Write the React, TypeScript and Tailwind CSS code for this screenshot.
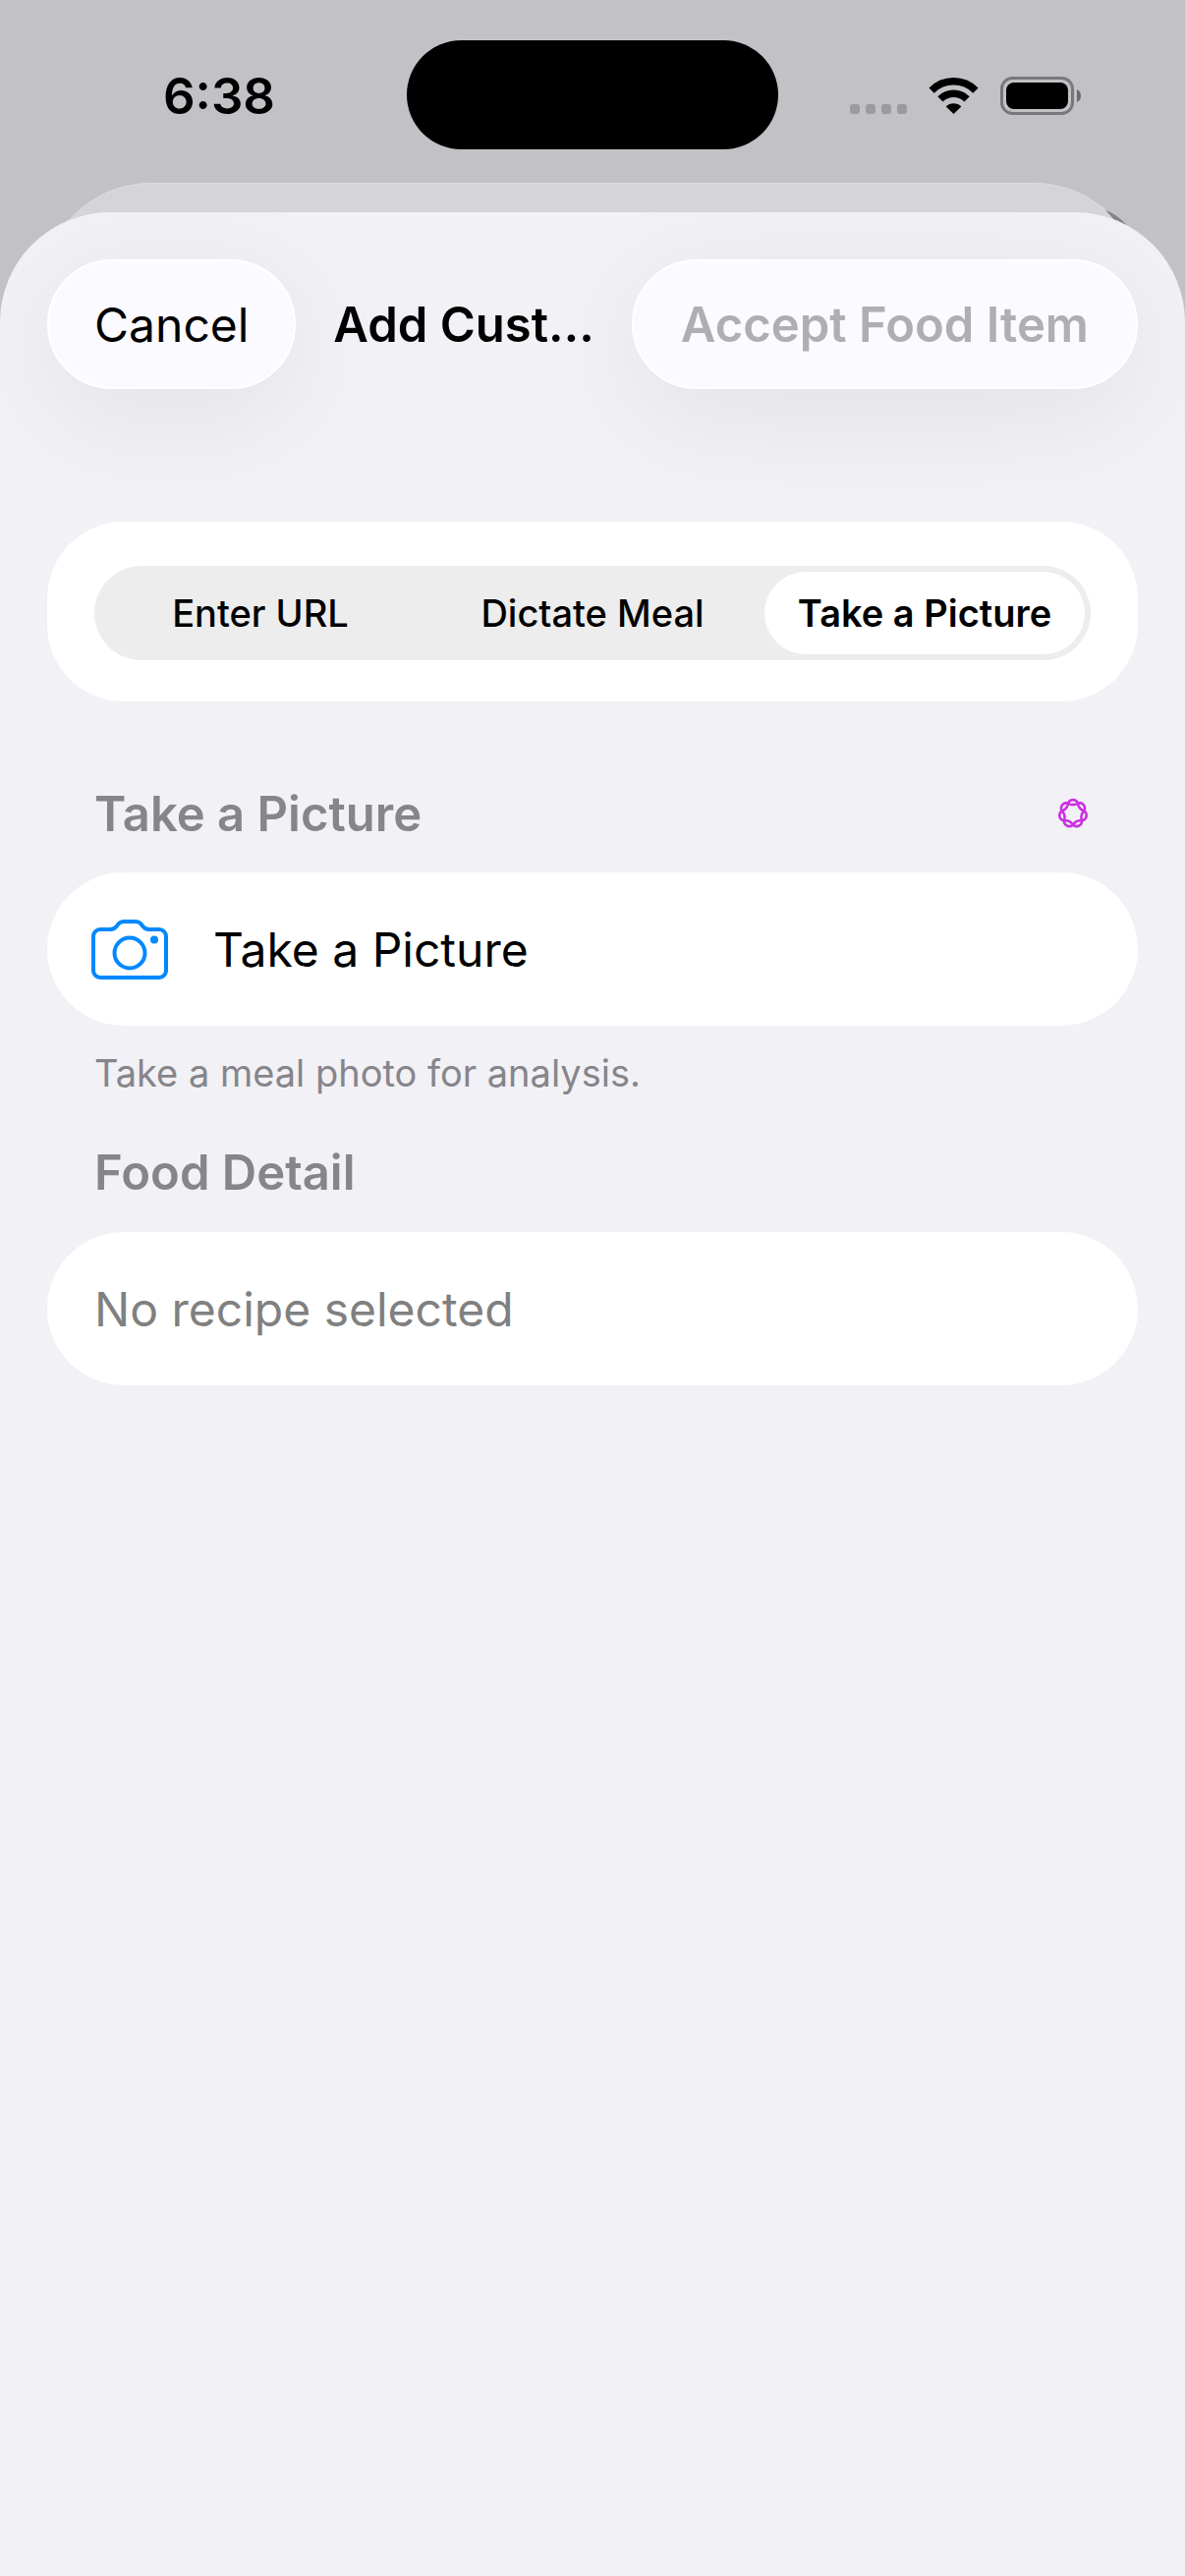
import { useState } from 'react';

const tabs = ['Enter URL', 'Dictate Meal', 'Take a Picture'];

// closed seven-lobed rosette, two turns around the centre
const rosette = Array.from({ length: 169 }, (_, i) => {
  const t = (i / 168) * Math.PI * 4;
  const angle = t + 0.04 * Math.sin(7 * t);
  const r = 11.4 + 2.5 * Math.cos(3.5 * t);
  const x = 18 + r * Math.sin(angle);
  const y = 18 - r * Math.cos(angle);
  return `${x.toFixed(2)},${y.toFixed(2)}`;
}).join(' ');

function CameraIcon() {
  return (
    <svg className="h-[61px] w-[78px]" viewBox="0 0 78 61" fill="none" stroke="#0088ff" strokeWidth="4">
      <path d="M9 10H19.500C22.500 10 24 9 26 6.500L27 5C28.800 2.800 30 2 33 2H45C48 2 49.200 2.800 51 5L52 6.500C54 9 55.500 10 58.500 10H69A7 7 0 0 1 76 17V52A7 7 0 0 1 69 59H9A7 7 0 0 1 2 52V17A7 7 0 0 1 9 10Z" />
      <circle cx="39" cy="34" r="15.500" />
      <circle cx="64" cy="20.500" r="4" fill="#0088ff" stroke="none" />
    </svg>
  );
}

function StatusBar() {
  return (
    <div className="grid h-[186px] grid-cols-[1fr_378px_1fr] items-start pt-[41px]">
      <div className="flex h-[111px] items-center justify-center pt-1 pl-8 text-[51px] font-semibold">6:38</div>
      <div className="h-[111px] rounded-full bg-black" />
      <div className="flex h-[111px] items-center justify-center gap-[22px] pt-[2px] pr-[34px]">
        <svg className="h-[38px] w-[58px]" viewBox="0 0 58 38" fill="#9b9b9d">
          <rect x="0" y="27" width="10" height="10" rx="3" />
          <rect x="16" y="27" width="10" height="10" rx="3" />
          <rect x="32" y="27" width="10" height="10" rx="3" />
          <rect x="48" y="27" width="10" height="10" rx="3" />
        </svg>
        <svg className="h-[38px] w-[51px]" viewBox="0 0 51 38" fill="none" stroke="#000" strokeWidth="7.500">
          <path d="M3.100 13.100A31.700 31.700 0 0 1 47.900 13.100" />
          <path d="M11.900 21.900A19.200 19.200 0 0 1 39.100 21.900" />
          <path d="M25.500 37L17.700 29.500A11 11 0 0 1 33.300 29.500Z" fill="#000" stroke="none" />
        </svg>
        <svg className="h-[39px] w-[82px]" viewBox="0 0 82 39">
          <rect x="1.500" y="1.500" width="72" height="36" rx="11" fill="none" stroke="#78787a" strokeWidth="3" />
          <rect x="6" y="6" width="63" height="27" rx="8" />
          <path d="M78 13C80.500 14 82 16.500 82 19.500S80.500 25 78 26Z" fill="#6b6b6d" />
        </svg>
      </div>
    </div>
  );
}

export default function App() {
  const [tab, setTab] = useState('Take a Picture');

  return (
    <div className="flex min-h-screen flex-col bg-[#c2c1c6] font-['Inter',sans-serif] text-black">
      <StatusBar />

      {/* Sheet underneath */}
      <div className="relative mx-[42px] h-[120px] rounded-t-[112px] border-t border-[#dddce1] bg-[#d5d4d9]">
        <svg className="absolute top-[27px] right-[14px] h-[18px] w-[26px]" viewBox="0 0 26 18" fill="#868688">
          <path d="M1 0C10 3 18 9 25 18H16C12 12 7 6 1 0Z" />
        </svg>
      </div>

      <main className="relative -mt-[90px] flex-1 overflow-hidden rounded-t-[112px] bg-[#f2f1f6] px-12">
        <header className="flex items-center pt-12">
          <button className="h-[132px] shrink-0 rounded-full border-2 border-white bg-[#fbfaff] px-[46px] pt-[2px] text-[48px] shadow-[0_24px_120px_rgba(0,0,0,0.07)]">
            Cancel
          </button>
          <h1 className="flex-1 pt-[2px] text-center text-[49px] font-semibold whitespace-nowrap">Add Cust…</h1>
          <button
            disabled
            className="h-[132px] shrink-0 rounded-full border-2 border-white bg-[#fbfaff] px-12 pt-[2px] text-[49px] font-semibold text-[#afafb1] shadow-[0_24px_120px_rgba(0,0,0,0.07)]"
          >
            Accept Food Item
          </button>
        </header>

        {/* Input mode */}
        <div className="relative mt-[135px] rounded-[78px] bg-white px-12 pt-[45px] pb-[42px]">
          <fieldset className="grid h-24 grid-cols-3 gap-3 rounded-full bg-[#ededed] p-[6px]">
            {tabs.map((name) => (
              <label
                key={name}
                className="flex items-center justify-center rounded-full text-[38px] font-medium whitespace-nowrap has-checked:bg-white has-checked:font-semibold"
              >
                <input
                  type="radio"
                  name="mode"
                  className="sr-only"
                  checked={tab === name}
                  onChange={() => setTab(name)}
                />
                {name}
              </label>
            ))}
          </fieldset>
        </div>

        {/* Take a picture */}
        <section className="mt-[84px]">
          <div className="flex h-[60px] items-center justify-between px-12">
            <h2 className="pt-[2px] text-[49px] font-semibold text-[#86858a]">Take a Picture</h2>
            <svg className="h-9 w-9" viewBox="0 0 36 36" fill="none" stroke="#cb30e0" strokeWidth="2.600">
              <polygon points={rosette} />
            </svg>
          </div>
          <button className="mt-[30px] flex h-[156px] w-full items-center gap-[46px] rounded-full bg-white px-[45px] text-[48px]">
            <CameraIcon />
            <span className="pt-[2px]">Take a Picture</span>
          </button>
          <p className="mt-6 px-12 text-[38px] leading-[48px] text-[#86858a]">Take a meal photo for analysis.</p>
        </section>

        {/* Food detail */}
        <section className="mt-12">
          <h2 className="px-12 text-[49px] leading-[60px] font-semibold text-[#86858a]">Food Detail</h2>
          <div className="mt-[30px] flex h-[156px] items-center rounded-full bg-white px-12 pt-[2px] text-[48px] text-[#808080]">
            No recipe selected
          </div>
        </section>
      </main>
    </div>
  );
}
